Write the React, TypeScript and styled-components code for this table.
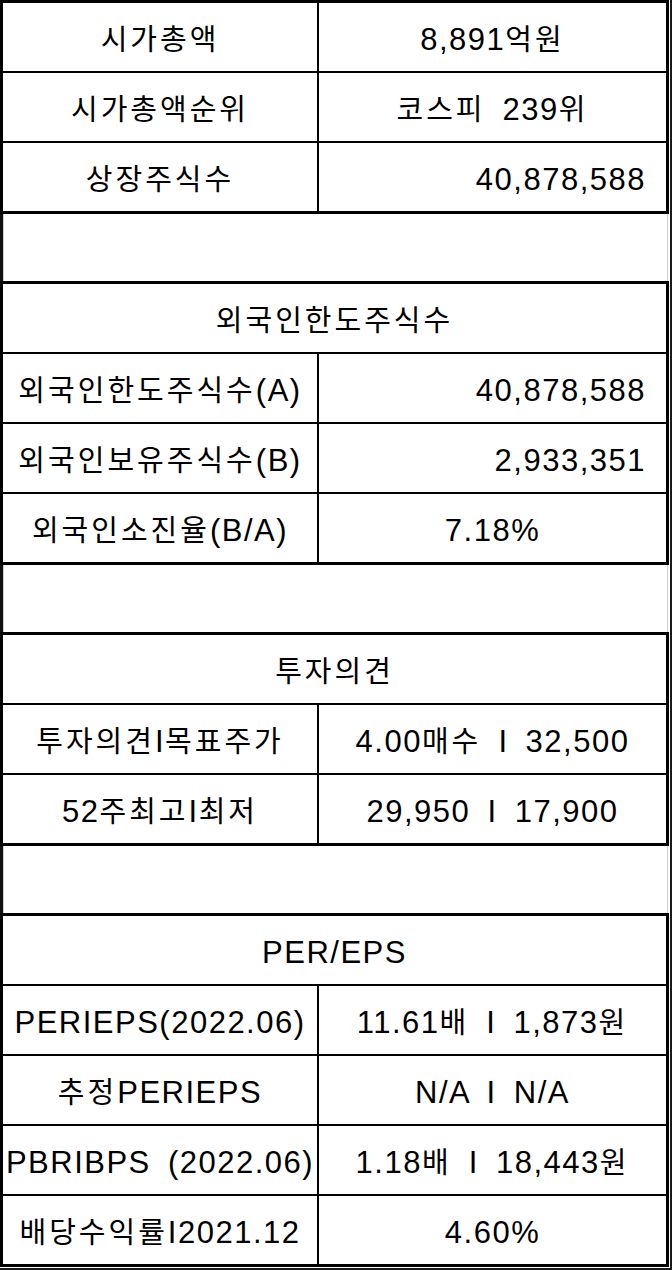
import { FC } from 'react';
import styled, { createGlobalStyle } from 'styled-components';

type Align = 'center' | 'right';
type Pair = { label: string; value: string; align?: Align };
type Section = { title?: string; rows: Pair[] };

const sections: Section[] = [
  {
    rows: [
      { label: '시가총액', value: '8,891억원' },
      { label: '시가총액순위', value: '코스피 239위' },
      { label: '상장주식수', value: '40,878,588', align: 'right' },
    ],
  },
  {
    title: '외국인한도주식수',
    rows: [
      { label: '외국인한도주식수(A)', value: '40,878,588', align: 'right' },
      { label: '외국인보유주식수(B)', value: '2,933,351', align: 'right' },
      { label: '외국인소진율(B/A)', value: '7.18%' },
    ],
  },
  {
    title: '투자의견',
    rows: [
      { label: '투자의견I목표주가', value: '4.00매수 I 32,500' },
      { label: '52주최고I최저', value: '29,950 I 17,900' },
    ],
  },
  {
    title: 'PER/EPS',
    rows: [
      { label: 'PERIEPS(2022.06)', value: '11.61배 I 1,873원' },
      { label: '추정PERIEPS', value: 'N/A I N/A' },
      { label: 'PBRIBPS (2022.06)', value: '1.18배 I 18,443원' },
      { label: '배당수익률I2021.12', value: '4.60%' },
    ],
  },
];

// hangul runs get their own font size, latin runs stay tall and narrow
const Txt: FC<{ text: string }> = ({ text }) => (
  <span>
    {text.split(/([\uAC00-\uD7A3]+)/).map((part, i) =>
      i % 2 === 1 ? <Ko key={i}>{part}</Ko> : part,
    )}
  </span>
);

export default function App() {
  return (
    <>
      <GlobalStyle />
      <Page>
        {sections.map((section, si) => (
          <Block key={si}>
            {si > 0 && <Spacer />}
            <Table>
              {section.title && (
                <Row $single>
                  <Cell>
                    <Txt text={section.title} />
                  </Cell>
                </Row>
              )}
              {section.rows.map((row) => (
                <Row key={row.label}>
                  <Cell $label>
                    <Txt text={row.label} />
                  </Cell>
                  <Cell $align={row.align ?? 'center'}>
                    <Txt text={row.value} />
                  </Cell>
                </Row>
              ))}
            </Table>
          </Block>
        ))}
      </Page>
    </>
  );
}

const GlobalStyle = createGlobalStyle`
  html, body {
    margin: 0;
    padding: 0;
    background: #fff;
  }
  * {
    box-sizing: border-box;
  }
`;

const Page = styled.div`
  width: 672px;
  height: 1270px;
  padding: 0 1px 1px 0;
  border-right: 2px solid #1a1a1a;
  border-bottom: 2px solid #1a1a1a;
  display: flex;
  flex-direction: column;
`;

const Block = styled.div`
  display: flex;
  flex-direction: column;
`;

const Spacer = styled.div`
  height: 67px;
  border-left: 3px solid #111;
  border-right: 1px solid #fff;
  box-shadow: inset 1px 0 0 #cfcfcf, inset -1px 0 0 #cfcfcf;
`;

const Table = styled.div`
  border: 3px solid #000;
  display: flex;
  flex-direction: column;
`;

const Row = styled.div<{ $single?: boolean }>`
  display: grid;
  grid-template-columns: ${({ $single }) => ($single ? '1fr' : '316px 1fr')};
  height: 68px;
  box-sizing: content-box;
  & + & {
    border-top: 2px solid #000;
  }
`;

const Cell = styled.div<{ $label?: boolean; $align?: Align }>`
  display: flex;
  align-items: center;
  justify-content: ${({ $align }) => ($align === 'right' ? 'flex-end' : 'center')};
  padding: 4px ${({ $align }) => ($align === 'right' ? '20px' : '0')} 0 0;
  white-space: nowrap;
  overflow: visible;
  color: #000;
  font-family: 'Liberation Sans', 'Noto Sans CJK KR', sans-serif;
  font-size: 31px;
  letter-spacing: 1.5px;
  word-spacing: 7px;
  line-height: 1;
  ${({ $label }) => $label && 'border-right: 2px solid #000;'}
`;

const Ko = styled.span`
  font-family: 'Noto Sans CJK KR', sans-serif;
  font-size: 29px;
  letter-spacing: 3px;
`;
